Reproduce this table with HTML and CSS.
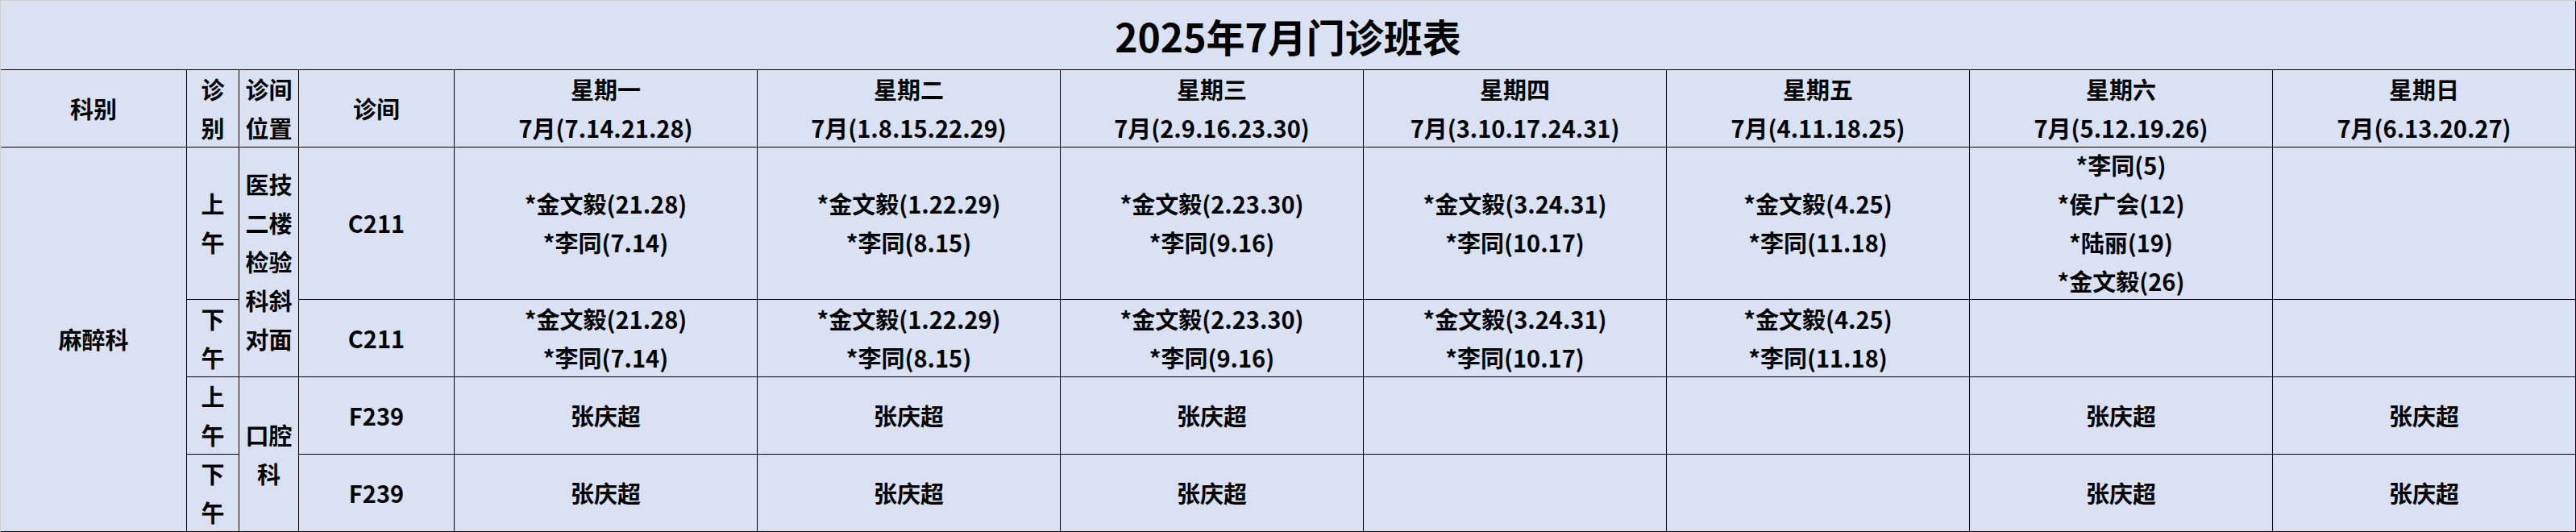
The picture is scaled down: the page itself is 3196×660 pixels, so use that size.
FILE: index.html
```html
<!DOCTYPE html>
<html lang="zh-CN">
<head>
<meta charset="utf-8">
<title>2025年7月门诊班表</title>
<link rel="stylesheet" href="styles.css">
</head>
<body>
<div class="sheet">
  <div class="cell title">2025年7月门诊班表</div>

  <div class="cell">科别</div>
  <div class="cell">诊<br>别</div>
  <div class="cell">诊间<br>位置</div>
  <div class="cell">诊间</div>
  <div class="cell">星期一<br>7月(7.14.21.28)</div>
  <div class="cell">星期二<br>7月(1.8.15.22.29)</div>
  <div class="cell">星期三<br>7月(2.9.16.23.30)</div>
  <div class="cell">星期四<br>7月(3.10.17.24.31)</div>
  <div class="cell">星期五<br>7月(4.11.18.25)</div>
  <div class="cell">星期六<br>7月(5.12.19.26)</div>
  <div class="cell">星期日<br>7月(6.13.20.27)</div>

  <div class="cell span4">麻醉科</div>
  <div class="cell">上<br>午</div>
  <div class="cell span2">医技<br>二楼<br>检验<br>科斜<br>对面</div>
  <div class="cell">C211</div>
  <div class="cell">*金文毅(21.28)<br>*李同(7.14)</div>
  <div class="cell">*金文毅(1.22.29)<br>*李同(8.15)</div>
  <div class="cell">*金文毅(2.23.30)<br>*李同(9.16)</div>
  <div class="cell">*金文毅(3.24.31)<br>*李同(10.17)</div>
  <div class="cell">*金文毅(4.25)<br>*李同(11.18)</div>
  <div class="cell">*李同(5)<br>*侯广会(12)<br>*陆丽(19)<br>*金文毅(26)</div>
  <div class="cell"></div>

  <div class="cell">下<br>午</div>
  <div class="cell">C211</div>
  <div class="cell">*金文毅(21.28)<br>*李同(7.14)</div>
  <div class="cell">*金文毅(1.22.29)<br>*李同(8.15)</div>
  <div class="cell">*金文毅(2.23.30)<br>*李同(9.16)</div>
  <div class="cell">*金文毅(3.24.31)<br>*李同(10.17)</div>
  <div class="cell">*金文毅(4.25)<br>*李同(11.18)</div>
  <div class="cell"></div>
  <div class="cell"></div>

  <div class="cell">上<br>午</div>
  <div class="cell span2">口腔<br>科</div>
  <div class="cell">F239</div>
  <div class="cell">张庆超</div>
  <div class="cell">张庆超</div>
  <div class="cell">张庆超</div>
  <div class="cell"></div>
  <div class="cell"></div>
  <div class="cell">张庆超</div>
  <div class="cell">张庆超</div>

  <div class="cell">下<br>午</div>
  <div class="cell">F239</div>
  <div class="cell">张庆超</div>
  <div class="cell">张庆超</div>
  <div class="cell">张庆超</div>
  <div class="cell"></div>
  <div class="cell"></div>
  <div class="cell">张庆超</div>
  <div class="cell">张庆超</div>
</div>
</body>
</html>
```

FILE: styles.css
```css
html, body {
  margin: 0;
  padding: 0;
  background: #d9e1f2;
}

.sheet {
  width: 3196px;
  height: 660px;
  box-sizing: border-box;
  display: grid;
  grid-template-columns: 230px 64px 73px 192px repeat(7, 375px);
  grid-template-rows: 85px 95px 188px 95px 95px 95px;
  gap: 1px;
  background: #000;
  border-top: 1px solid #d0d0d0;
  border-left: 1px solid #d0d0d0;
  padding: 0 1px 1px 0;
  font-family: "Noto Sans CJK SC", "Noto Sans", sans-serif;
  font-weight: 700;
  font-size: 29px;
  line-height: 48px;
  color: #000;
}

.cell {
  background: #d9e1f2;
  display: flex;
  align-items: center;
  justify-content: center;
  text-align: center;
  white-space: nowrap;
  overflow: visible;
  box-sizing: border-box;
  padding-bottom: 2px;
}

.title {
  grid-column: 1 / -1;
  font-size: 48px;
  line-height: 60px;
  padding-bottom: 0;
}

.span4 {
  grid-row: span 4;
}

.span2 {
  grid-row: span 2;
}
```
